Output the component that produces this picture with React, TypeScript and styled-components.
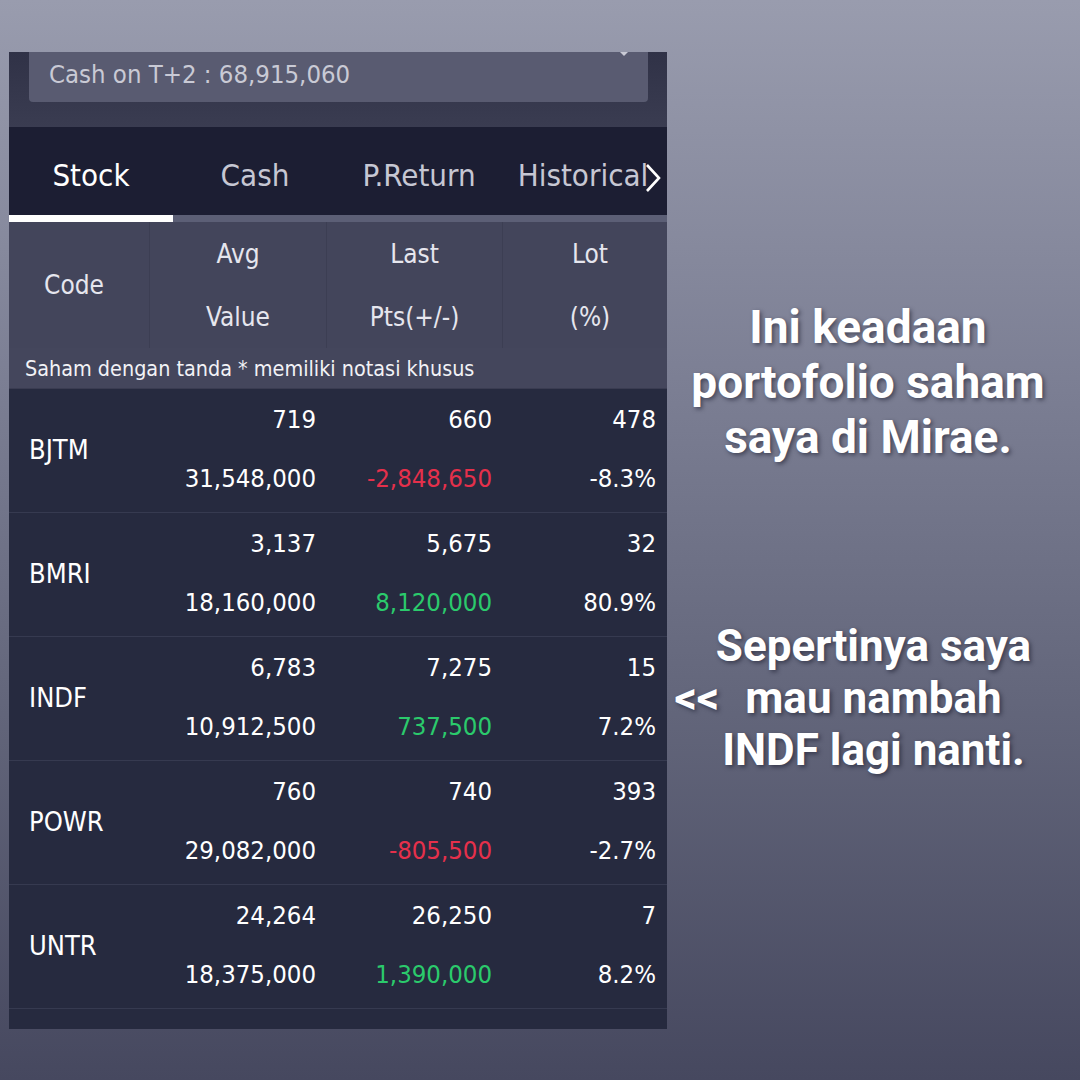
import styled, { createGlobalStyle } from 'styled-components'

const APP_FONT = '"DejaVu Sans Condensed", "DejaVu Sans", sans-serif'
const COLUMNS = '141px 177px 176px 164px'

type Holding = {
  code: string
  avg: string
  last: string
  lot: string
  value: string
  pts: string
  pct: string
}

const holdings: Holding[] = [
  { code: 'BJTM', avg: '719', last: '660', lot: '478', value: '31,548,000', pts: '-2,848,650', pct: '-8.3%' },
  { code: 'BMRI', avg: '3,137', last: '5,675', lot: '32', value: '18,160,000', pts: '8,120,000', pct: '80.9%' },
  { code: 'INDF', avg: '6,783', last: '7,275', lot: '15', value: '10,912,500', pts: '737,500', pct: '7.2%' },
  { code: 'POWR', avg: '760', last: '740', lot: '393', value: '29,082,000', pts: '-805,500', pct: '-2.7%' },
  { code: 'UNTR', avg: '24,264', last: '26,250', lot: '7', value: '18,375,000', pts: '1,390,000', pct: '8.2%' },
]

const tabs = ['Stock', 'Cash', 'P.Return', 'Historical']

const GlobalStyle = createGlobalStyle`
  html, body {
    margin: 0;
    padding: 0;
  }

  body {
    width: 1080px;
    height: 1080px;
    overflow: hidden;
    background: linear-gradient(180deg, #999cae 0%, #7c7f94 35%, #63667b 65%, #46485f 100%);
    font-family: ${APP_FONT};
  }
`

const Page = styled.div`
  display: flex;
  width: 1080px;
  height: 1080px;
  padding: 52px 0 0 9px;
  box-sizing: border-box;
`

const Panel = styled.div`
  display: flex;
  flex-direction: column;
  width: 658px;
  height: 977px;
  background: #262a3f;
  overflow: hidden;
`

const TopSection = styled.div`
  height: 75px;
  padding: 0 19px 0 20px;
  background: linear-gradient(180deg, #303247 0%, #3a3c51 100%);
  flex-shrink: 0;
`

const CashBox = styled.div`
  position: relative;
  display: flex;
  align-items: center;
  height: 50px;
  padding: 0 0 6px 20px;
  box-sizing: border-box;
  background: #595b71;
  border-radius: 0 0 4px 4px;
  color: #c9cad5;
  font-size: 25.5px;

  &::after {
    content: '';
    position: absolute;
    top: 0;
    right: 20px;
    border-left: 4px solid transparent;
    border-right: 4px solid transparent;
    border-top: 4px solid #c9cad5;
  }
`

const TabBar = styled.div`
  position: relative;
  display: grid;
  grid-template-columns: repeat(4, 164px);
  height: 88px;
  background: #1c1e33;
  overflow: hidden;
  flex-shrink: 0;
`

const Tab = styled.div<{ $active?: boolean }>`
  display: flex;
  align-items: center;
  justify-content: center;
  padding-top: 8px;
  color: ${p => (p.$active ? '#ffffff' : '#c6c7d3')};
  font-size: 31px;
  white-space: nowrap;
`

const TabArrow = styled.svg`
  position: absolute;
  right: 6px;
  top: 36px;
`

const TabTrack = styled.div`
  height: 7px;
  background: #5c5f76;
  flex-shrink: 0;
`

const TabIndicator = styled.div`
  width: 164px;
  height: 100%;
  background: #ffffff;
`

const HeaderGrid = styled.div`
  display: grid;
  grid-template-columns: ${COLUMNS};
  height: 126px;
  background: #43455b;
  flex-shrink: 0;
`

const HeaderCell = styled.div<{ $last?: boolean }>`
  display: grid;
  grid-template-rows: 1fr 1fr;
  align-items: center;
  justify-items: center;
  padding-left: ${p => (p.$last ? '10px' : '0')};
  border-right: ${p => (p.$last ? 'none' : '1px solid #3c3e53')};
  color: #e6e6ee;
  font-size: 26px;
`

const CodeHeader = styled.div`
  display: flex;
  align-items: center;
  justify-content: center;
  padding-right: 10px;
  border-right: 1px solid #3c3e53;
  color: #e6e6ee;
  font-size: 26px;
`

const Note = styled.div`
  display: flex;
  align-items: center;
  height: 40px;
  padding-left: 16px;
  background: #44465c;
  border-bottom: 1px solid #3a3c51;
  color: #f2f2f6;
  font-size: 21.4px;
  flex-shrink: 0;
`

const Row = styled.div`
  display: grid;
  grid-template-columns: ${COLUMNS};
  height: 123px;
  border-bottom: 1px solid #363a50;
  flex-shrink: 0;
`

const CodeCell = styled.div`
  display: flex;
  align-items: center;
  padding: 0 0 3px 20px;
  color: #ffffff;
  font-size: 27px;
`

const ValueCell = styled.div`
  display: grid;
  grid-template-rows: 1fr 1fr;
  align-items: center;
  justify-items: end;
  padding: 0 11px 4px 0;
  font-size: 25.5px;
  color: #ffffff;
`

const Num = styled.span<{ $tone?: 'up' | 'down' }>`
  color: ${p => (p.$tone === 'up' ? '#2bca6c' : p.$tone === 'down' ? '#e5304b' : '#ffffff')};
`

const Captions = styled.div`
  display: flex;
  flex-direction: column;
  align-items: center;
  width: 402px;
  font-family: Roboto, "Noto Sans", sans-serif;
  font-weight: 700;
  color: #ffffff;
  text-shadow: 2px 2px 4px rgba(20, 22, 40, 0.55);
`

const CaptionBlock = styled.div<{ $top: number; $lineHeight: number; $size: number }>`
  display: flex;
  flex-direction: column;
  align-items: center;
  margin-top: ${p => p.$top}px;
  font-size: ${p => p.$size}px;
  line-height: ${p => p.$lineHeight}px;
  white-space: nowrap;
`

const CaptionLine = styled.div<{ $shift?: number }>`
  position: relative;
  margin-left: ${p => p.$shift ?? 0}px;
`

const Pointer = styled.span`
  position: absolute;
  right: calc(100% + 26px);
  top: 0;
`

function toneOf(pts: string): 'up' | 'down' {
  return pts.startsWith('-') ? 'down' : 'up'
}

function App() {
  return (
    <>
      <GlobalStyle />
      <Page>
        <Panel>
          <TopSection>
            <CashBox>Cash on T+2 : 68,915,060</CashBox>
          </TopSection>

          <TabBar>
            {tabs.map((tab, i) => (
              <Tab key={tab} $active={i === 0}>
                {tab}
              </Tab>
            ))}
            <TabArrow width="16" height="30" viewBox="0 0 16 30">
              <path d="M2 2 L14 15 L2 28" fill="none" stroke="#ffffff" strokeWidth="2.6" />
            </TabArrow>
          </TabBar>
          <TabTrack>
            <TabIndicator />
          </TabTrack>

          <HeaderGrid>
            <CodeHeader>Code</CodeHeader>
            <HeaderCell>
              <span>Avg</span>
              <span>Value</span>
            </HeaderCell>
            <HeaderCell>
              <span>Last</span>
              <span>Pts(+/-)</span>
            </HeaderCell>
            <HeaderCell $last>
              <span>Lot</span>
              <span>(%)</span>
            </HeaderCell>
          </HeaderGrid>
          <Note>Saham dengan tanda * memiliki notasi khusus</Note>

          {holdings.map(h => (
            <Row key={h.code}>
              <CodeCell>{h.code}</CodeCell>
              <ValueCell>
                <Num>{h.avg}</Num>
                <Num>{h.value}</Num>
              </ValueCell>
              <ValueCell>
                <Num>{h.last}</Num>
                <Num $tone={toneOf(h.pts)}>{h.pts}</Num>
              </ValueCell>
              <ValueCell>
                <Num>{h.lot}</Num>
                <Num>{h.pct}</Num>
              </ValueCell>
            </Row>
          ))}
        </Panel>

        <Captions>
          <CaptionBlock $top={248} $lineHeight={55} $size={46}>
            <CaptionLine>Ini keadaan</CaptionLine>
            <CaptionLine>portofolio saham</CaptionLine>
            <CaptionLine>saya di Mirae.</CaptionLine>
          </CaptionBlock>
          <CaptionBlock $top={155} $lineHeight={52} $size={44}>
            <CaptionLine $shift={11}>Sepertinya saya</CaptionLine>
            <CaptionLine $shift={11}>
              <Pointer>&lt;&lt;</Pointer>
              mau nambah
            </CaptionLine>
            <CaptionLine $shift={11}>INDF lagi nanti.</CaptionLine>
          </CaptionBlock>
        </Captions>
      </Page>
    </>
  )
}

export default App
